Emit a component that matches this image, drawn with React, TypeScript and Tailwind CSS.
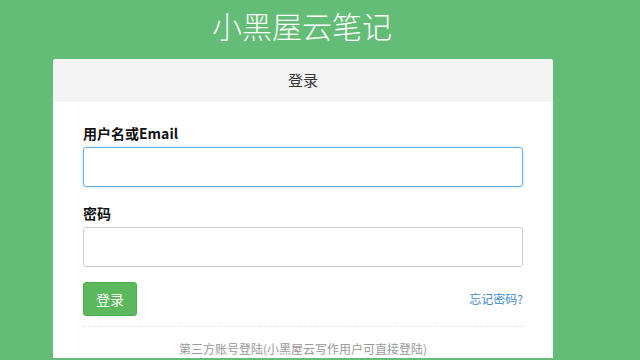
export default function App() {
  return (
    <div className="h-[360px] w-[640px] overflow-hidden bg-[#64bd77] font-['Noto_Sans_CJK_SC',sans-serif] text-[#333]">
      {/* 标题 */}
      <div className="flex h-[59px] items-center justify-center pb-[9px] pr-[36px]">
        <h1 className="text-[30px] leading-[34px] font-light text-white">小黑屋云笔记</h1>
      </div>

      {/* 登录卡片 */}
      <div className="ml-[53px] w-[500px] rounded-t-[3px] bg-white">
        <div className="flex h-[43px] items-center justify-center rounded-t-[3px] bg-[#f4f4f4] text-[15px]">
          登录
        </div>
        <div className="px-[30px] pt-[21px]">
          <label className="block text-[14px] leading-[20px] font-bold text-[#111]">用户名或Email</label>
          <input
            type="text"
            className="mt-[4px] block h-[40px] w-[440px] rounded-[3px] border border-[#66afe9] px-3 outline-none shadow-[0_0_3px_rgba(102,175,233,0.4)]"
          />
          <label className="mt-[16px] block text-[14px] leading-[20px] font-bold text-[#111]">密码</label>
          <input
            type="password"
            className="mt-[4px] block h-[40px] w-[440px] rounded-[3px] border border-[#ccc] px-3 outline-none"
          />
          <div className="mt-[15px] flex w-[440px] items-center justify-between">
            <button className="h-[34px] w-[54px] rounded-[3px] border border-[#4cae4c] bg-[#5cb85c] text-[14px] text-white">
              登录
            </button>
            <a className="text-[12px] text-[#428bca]">忘记密码?</a>
          </div>
          <div className="mt-[10px] w-[440px] border-t border-dashed border-[#e5e5e5]" />
          <p className="mt-[13px] w-[440px] text-center text-[12px] leading-[18px] text-[#999]">
            第三方账号登陆(小黑屋云写作用户可直接登陆)
          </p>
        </div>
      </div>
    </div>
  )
}
